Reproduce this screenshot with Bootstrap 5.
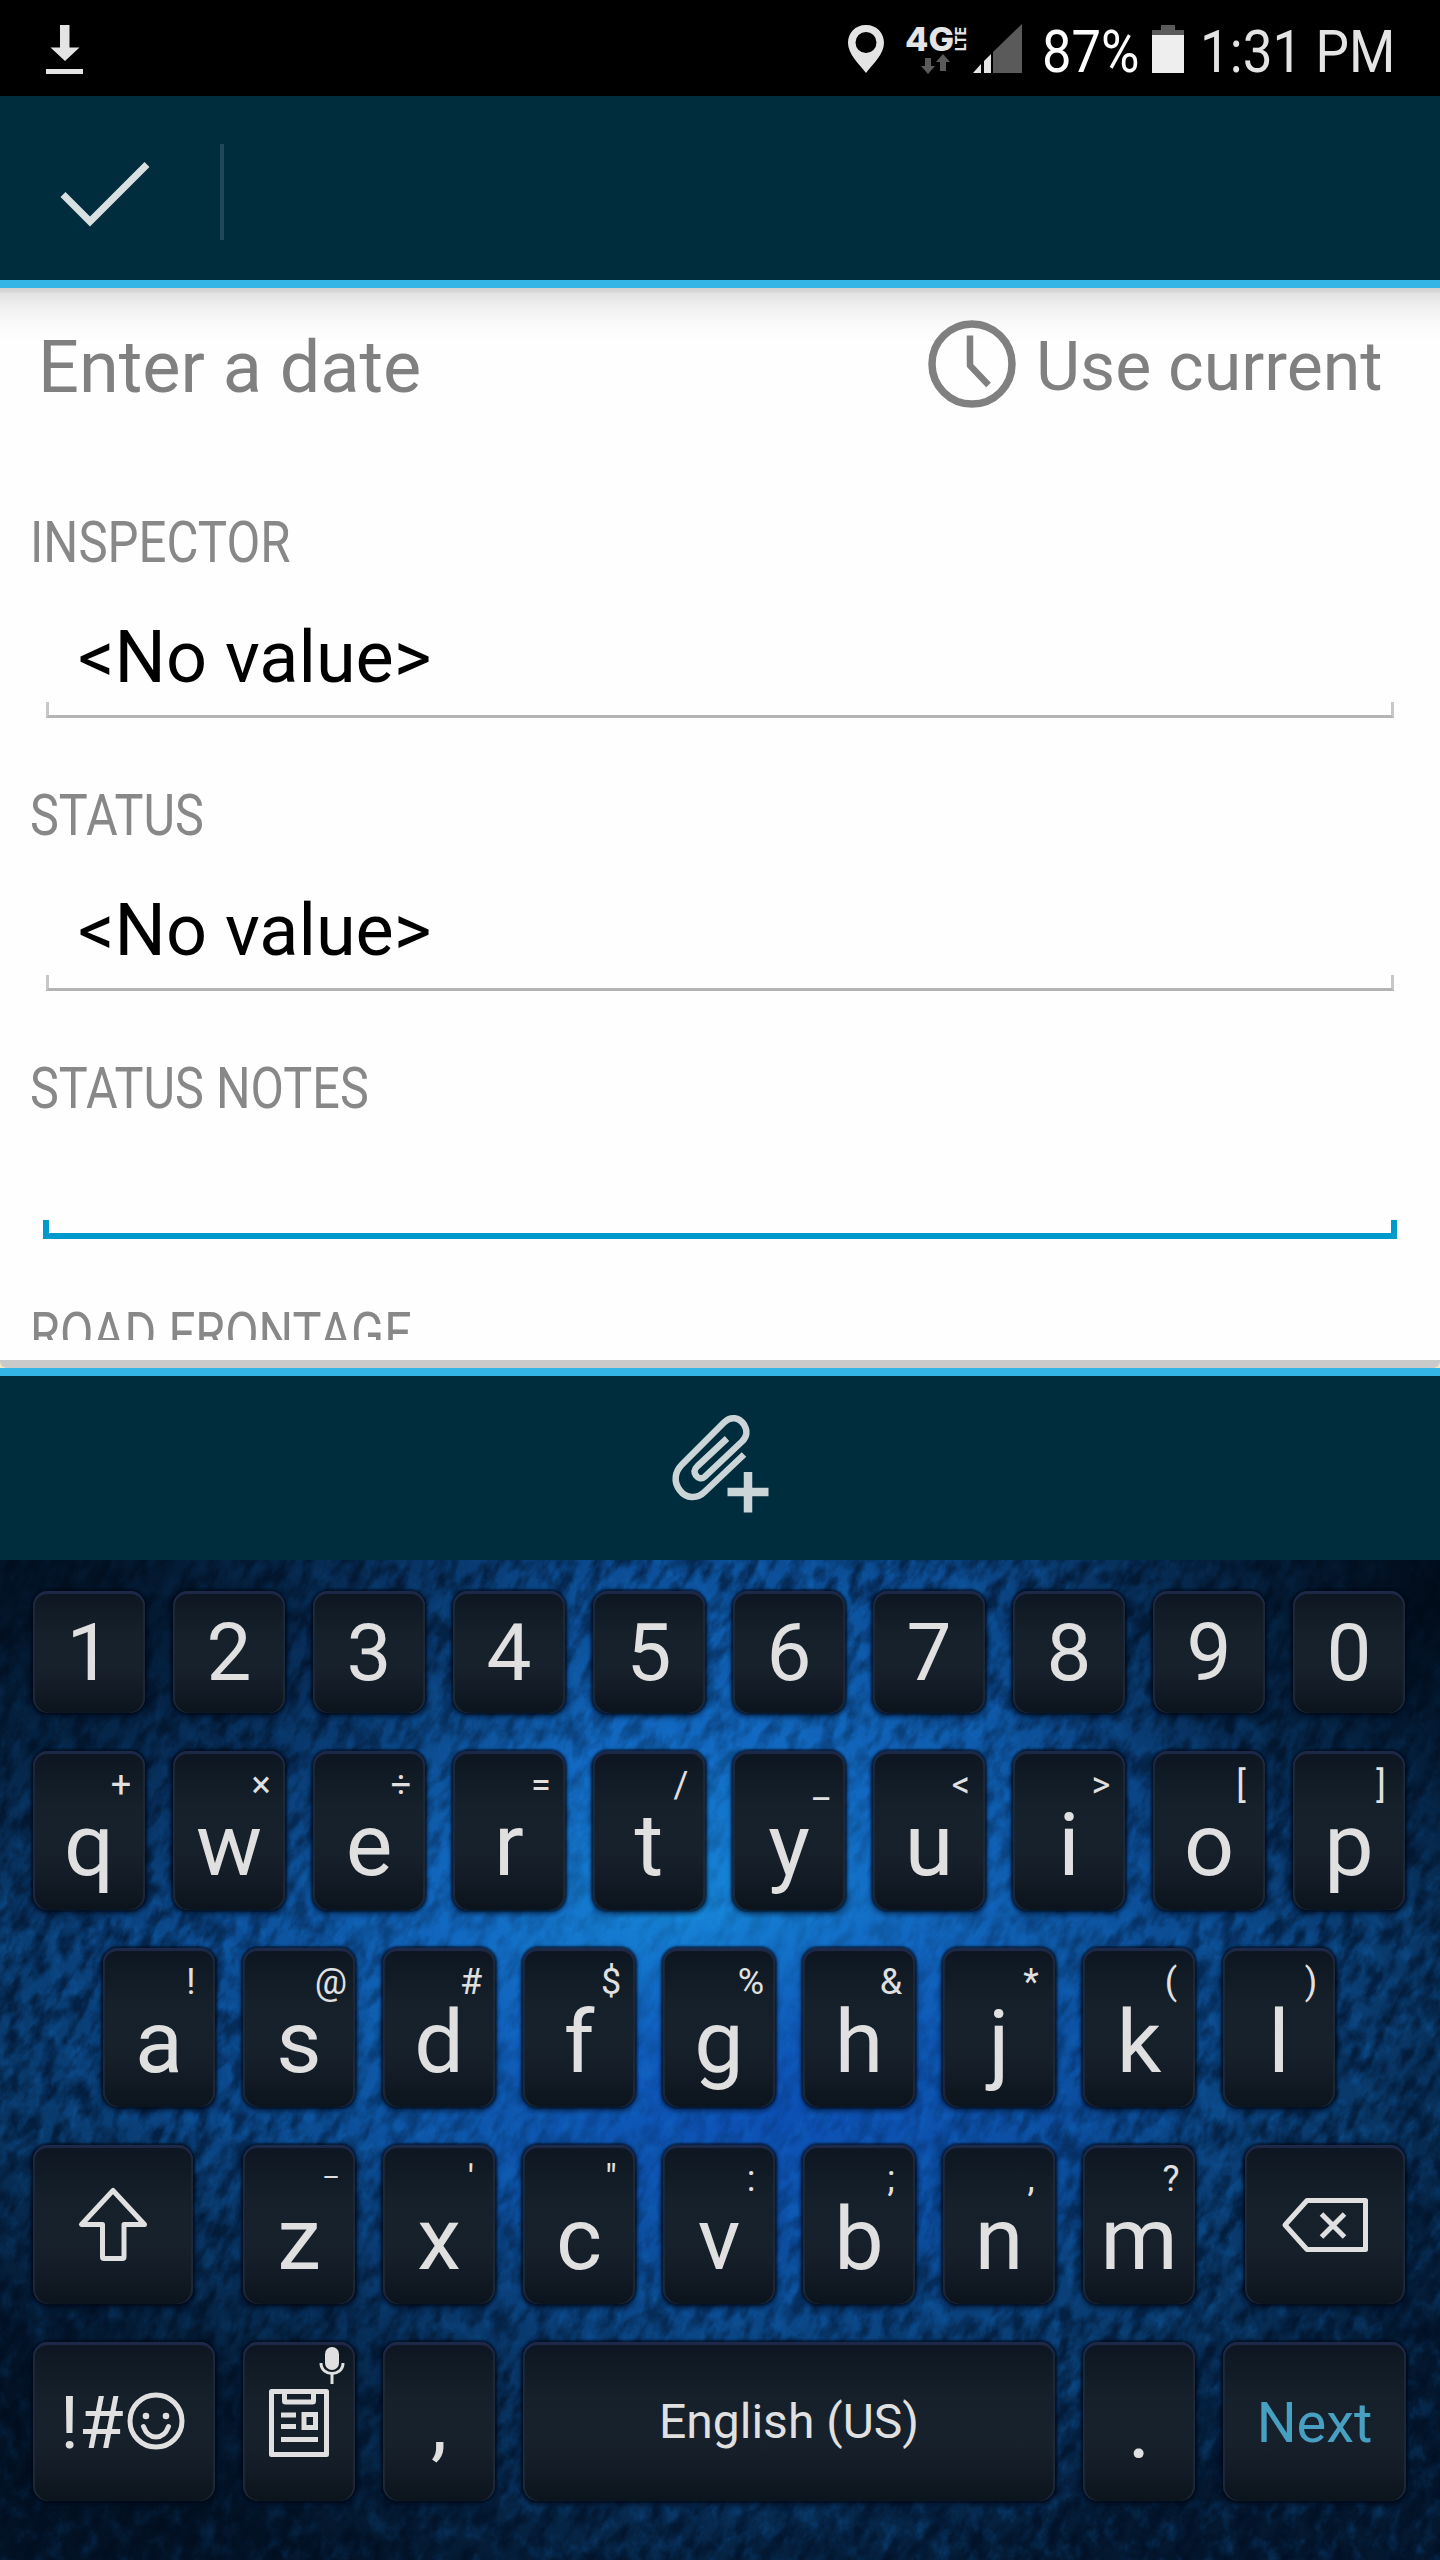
<!DOCTYPE html>
<html lang="en">
<head>
<meta charset="utf-8">
<meta name="viewport" content="width=device-width, initial-scale=1">
<title>Inspection form</title>
<link href="https://cdn.jsdelivr.net/npm/bootstrap@5.3.0/dist/css/bootstrap.min.css" rel="stylesheet">
<style>
  body { width: 1440px; height: 2560px; overflow: hidden; background: #fefefe; font-family: Roboto, "Liberation Sans", sans-serif; }
  svg { display: block; flex: none; }
  .statusbar { height: 96px; background: #000; color: #e4e4e4; }
  .squeeze { display: block; flex: none; white-space: nowrap; transform: scaleX(.852); transform-origin: 0 50%; }
  .squeeze.roomy { transform: scaleX(.862); }
  .statustext { font-size: 60px; line-height: 96px; padding-top: 4px; height: 96px; transform: scaleX(.885); }
  .pct { width: 101px; color: #fff; transform: scaleX(.875); }
  .actionbar { height: 192px; background: #002d3d; border-bottom: 8px solid #33b5e5; }
  .divider { width: 4px; height: 96px; margin-top: 8px; background: #20485a; }
  .formarea { height: 1052px; background: linear-gradient(#d2d2d2 0, #d6d6d6 4px, #e2e2e2 5px, #f0f0f0 19px, #f9f9f9 34px, #fefefe 52px); }
  .daterow { height: 160px; font-size: 72px; line-height: 160px; color: #808080; }
  .usecurrent { font-size: 68px; height: 158px; line-height: 158px; }
  .fieldlabel { font-size: 57px; line-height: 61px; height: 60px; color: #888; padding-left: 30px; }
  .fieldvalue { font-size: 72px; line-height: 92px; color: #000; margin-top: 40px; padding-left: 78px; height: 90px; }
  .tray { height: 16px; margin: 0 46px 67px; border: 3px solid #c8c8c8; border-top: 0; border-bottom-color: #b4b4b4; }
  .tray.active { height: 19px; margin: 102px 43px 64px; border: 6px solid #0099cc; border-top: 0; }
  .formfoot { height: 28px; background: linear-gradient(#fefefe 20px, #efe9c4 20px); }
  .formfoot div { height: 8px; background: #cacaca; border-radius: 0 0 7px 7px; }
  .attachbar { height: 192px; background: #002d3d; border-top: 8px solid #33b5e5; }

  .keyboard { height: 1000px; padding: 31px 33px 0; background: #03142a; }
  .wall { left: 0; top: 0; z-index: 0; }
  .keyrow { position: relative; z-index: 1; gap: 28px; }
  .capkey { --bs-btn-padding-x: 0; --bs-btn-padding-y: 0; --bs-btn-border-width: 0; width: 112px; height: 159px; flex: none; padding: 14px 0 0; border-radius: 15px; color: #e0e0e0;
    background: linear-gradient(#0d1620, #15202b 35%, #17212c 60%, #131c26 80%, #0b131c);
    box-shadow: inset 0 3px 1px #1e294a, inset 2px 0 1px #1d2838, inset -2px 0 1px #1d2838, 0 0 2px 2px rgba(0,8,20,.6), 0 3px 4px 2px rgba(0,10,30,.45); line-height: 1; }
  .capkey:hover { color: #e0e0e0; }
  .hint { width: 48px; font-size: 36px; line-height: 40px; height: 40px; }
  .dash { font-size: 27px; line-height: 38px; }
  .glyph { font-size: 88px; line-height: 80px; height: 80px; }
  .numkey { height: 122px; padding: 2px 0 0; font-size: 80px; }
  .lowkey { height: 159px; padding: 3px 0 0; }
  .wide { width: 160px; padding: 0; }
  .sym { width: 182px; font-size: 73px; }
  .next { width: 183px; font-size: 56px; color: #479fc2; }
  .space { width: 532px; font-size: 48px; padding-top: 0; }
  .dot { font-size: 88px; padding-top: 10px; }
  .comma { font-size: 82px; padding-top: 2px; }
</style>
</head>
<body>
<header>
  <div class="statusbar d-flex align-items-start">
    <svg class="ms-0" width="100" height="96" fill="#e4e4e4"><path d="M60 25h9.500v22.500h10L65 61 50.500 47.500H60z"/><path d="M46 69h37v5H46z"/></svg>
    <div class="d-flex align-items-start ms-auto" style="width:592px">
      <svg width="36" height="96"><path fill="#e4e4e4" fill-rule="evenodd" d="M18 25C7 25 0 33 0 43c0 11 11 21 18 30 7-9 18-19 18-30 0-10-7-18-18-18zm0 7a10.500 10.500 0 1 1 0 21 10.500 10.500 0 0 1 0-21z"/></svg>
      <svg width="62" height="96" style="margin-left:22px" fill="#e4e4e4" font-family="Inter, Roboto, sans-serif" font-weight="800"><text x="-1" y="50.500" font-size="33" textLength="49" lengthAdjust="spacingAndGlyphs">4G</text><text transform="translate(59.500 51) rotate(-90)" font-size="14" textLength="24" lengthAdjust="spacingAndGlyphs">LTE</text><path fill="#5a5a5a" d="M19 58h6v8h4l-7 8-7-8h4zM34 71v-9h-4l7-8 7 8h-4v9z"/></svg>
      <svg width="49" height="96" style="margin-left:5px"><path fill="#5a5a5a" d="M49 24v49H20V52z"/><path fill="#e4e4e4" d="M0 73l8-9v9zM11 73V61l7-7v19z"/></svg>
      <span class="squeeze statustext pct" style="margin-left:20px">87%</span>
      <svg width="32" height="96" style="margin-left:9px"><path fill="#5a5a5a" d="M9 25h14v5h9v6H0v-6h9z"/><path fill="#eee" d="M0 35h32v38H0z"/></svg>
      <span class="squeeze statustext" style="margin-left:16px">1:31 PM</span>
    </div>
  </div>
  <nav class="actionbar d-flex align-items-center">
    <svg width="220" height="184"><path d="M63 98l27 27 57-57" transform="translate(0 .5)" fill="none" stroke="#d8e0e2" stroke-width="7"/></svg>
    <div class="divider"></div>
  </nav>
</header>

<main>
  <div class="formarea overflow-hidden">
    <div class="daterow d-flex">
      <span style="margin-left:38px">Enter a date</span>
      <span class="usecurrent d-flex ms-auto" style="width:512px">
        <svg width="108" height="152"><g fill="none" stroke="#808080"><circle cx="44" cy="76" r="40" stroke-width="7.500"/><path d="M42 47.500v30l18.500 19.500" stroke-width="6.500" stroke-linejoin="round"/></g></svg>
        <span>Use current</span>
      </span>
    </div>
    <div style="height:64px"></div>
    <div class="fieldlabel"><span class="squeeze roomy">INSPECTOR</span></div>
    <div class="fieldvalue">&lt;No value&gt;</div>
    <div class="tray"></div>
    <div class="fieldlabel"><span class="squeeze">STATUS</span></div>
    <div class="fieldvalue">&lt;No value&gt;</div>
    <div class="tray"></div>
    <div class="fieldlabel"><span class="squeeze">STATUS NOTES</span></div>
    <div class="tray active"></div>
    <div class="fieldlabel"><span class="squeeze">ROAD FRONTAGE</span></div>
  </div>
  <div class="formfoot d-flex flex-column justify-content-end"><div></div></div>
</main>

<div class="attachbar d-flex justify-content-center">
  <svg width="100" height="140" viewBox="670 1375.500 100 140"><g fill="none" stroke="#cbd5d8" stroke-width="6.500"><path d="M744 1454L705 1491C697 1499 686 1498 680 1490C673 1481 675 1471 682 1464L724 1422C731 1415 739 1417 744 1424C748 1431 747 1436 742 1441L705 1476C702 1479 698 1478 696 1475C693 1471 695 1468 698 1465L727 1438"/><path d="M727.500 1491.500h41M748 1471.500v40.500" stroke-width="8.500"/></g></svg>
</div>

<section class="keyboard position-relative overflow-hidden">
  <svg class="wall position-absolute" width="1440" height="1000">
    <defs>
      <radialGradient id="glow" gradientUnits="userSpaceOnUse" cx="0" cy="0" r="1" gradientTransform="translate(690 350) scale(920 700)">
        <stop offset="0" stop-color="#1788da"/><stop offset=".25" stop-color="#1268c0"/><stop offset=".5" stop-color="#0c4e96"/><stop offset=".78" stop-color="#093868"/><stop offset="1" stop-color="#04182f"/>
      </radialGradient>
      <radialGradient id="royal" gradientUnits="userSpaceOnUse" cx="0" cy="0" r="1" gradientTransform="translate(780 550) scale(430 200)">
        <stop offset="0" stop-color="#0c4cb4" stop-opacity=".85"/><stop offset="1" stop-color="#0c4cb4" stop-opacity="0"/>
      </radialGradient>
      <radialGradient id="shade" gradientUnits="userSpaceOnUse" cx="0" cy="0" r="1" gradientTransform="translate(80 40) scale(560 340)">
        <stop offset="0" stop-color="#010a16" stop-opacity=".8"/><stop offset="1" stop-color="#010a16" stop-opacity="0"/>
      </radialGradient>
      <radialGradient id="shade2" gradientUnits="userSpaceOnUse" cx="0" cy="0" r="1" gradientTransform="translate(1440 40) scale(480 340)">
        <stop offset="0" stop-color="#010a16" stop-opacity=".9"/><stop offset="1" stop-color="#010a16" stop-opacity="0"/>
      </radialGradient>
      <radialGradient id="shade3" gradientUnits="userSpaceOnUse" cx="0" cy="0" r="1" gradientTransform="translate(150 860) scale(560 300)">
        <stop offset="0" stop-color="#010a16" stop-opacity=".6"/><stop offset="1" stop-color="#010a16" stop-opacity="0"/>
      </radialGradient>
      <radialGradient id="calm" gradientUnits="userSpaceOnUse" cx="0" cy="0" r="1" gradientTransform="translate(720 420) scale(600 440)">
        <stop offset="0" stop-color="#fff" stop-opacity=".14"/><stop offset=".4" stop-color="#fff" stop-opacity=".34"/><stop offset="1" stop-color="#fff"/>
      </radialGradient>
      <mask id="calmmask"><rect width="1440" height="1000" fill="url(#calm)"/></mask>
      <filter id="grain" x="0" y="0" width="100%" height="100%" color-interpolation-filters="sRGB">
        <feTurbulence type="fractalNoise" baseFrequency=".075 .038" numOctaves="4" seed="8"/>
        <feColorMatrix values="0 0 0 0 0  0 0 0 0 .05  0 0 0 0 .13  2.800 0 0 0 -1.100"/>
      </filter>
      <filter id="sheen" x="0" y="0" width="100%" height="100%" color-interpolation-filters="sRGB">
        <feTurbulence type="fractalNoise" baseFrequency=".06 .05" numOctaves="4" seed="31"/>
        <feColorMatrix values="0 0 0 0 .08  0 0 0 0 .45  0 0 0 0 .8  0 2.400 0 0 -1.100"/>
      </filter>
    </defs>
    <rect width="1440" height="1000" fill="url(#glow)"/>
    <rect width="1440" height="1000" fill="url(#royal)"/>
    <rect width="1440" height="1000" filter="url(#sheen)" opacity=".3"/>
    <g mask="url(#calmmask)"><g transform="translate(-350 -300) rotate(28 720 500)"><rect x="-400" y="-600" width="2800" height="2600" filter="url(#grain)" opacity=".62"/></g></g>
    <rect width="1440" height="1000" fill="url(#shade)"/>
    <rect width="1440" height="1000" fill="url(#shade2)"/>
    <rect width="1440" height="1000" fill="url(#shade3)"/>
  </svg>

  <div class="keyrow d-flex" style="margin-bottom:38px">
    <button class="btn capkey numkey">1</button><button class="btn capkey numkey">2</button><button class="btn capkey numkey">3</button><button class="btn capkey numkey">4</button><button class="btn capkey numkey">5</button><button class="btn capkey numkey">6</button><button class="btn capkey numkey">7</button><button class="btn capkey numkey">8</button><button class="btn capkey numkey">9</button><button class="btn capkey numkey">0</button>
  </div>
  <div class="keyrow d-flex" style="margin-bottom:38px">
    <button class="btn capkey d-flex flex-column"><span class="hint align-self-end">+</span><span class="glyph align-self-center">q</span></button>
    <button class="btn capkey d-flex flex-column"><span class="hint align-self-end">×</span><span class="glyph align-self-center">w</span></button>
    <button class="btn capkey d-flex flex-column"><span class="hint align-self-end">÷</span><span class="glyph align-self-center">e</span></button>
    <button class="btn capkey d-flex flex-column"><span class="hint align-self-end">=</span><span class="glyph align-self-center">r</span></button>
    <button class="btn capkey d-flex flex-column"><span class="hint align-self-end">/</span><span class="glyph align-self-center">t</span></button>
    <button class="btn capkey d-flex flex-column"><span class="hint align-self-end">_</span><span class="glyph align-self-center">y</span></button>
    <button class="btn capkey d-flex flex-column"><span class="hint align-self-end">&lt;</span><span class="glyph align-self-center">u</span></button>
    <button class="btn capkey d-flex flex-column"><span class="hint align-self-end">&gt;</span><span class="glyph align-self-center">i</span></button>
    <button class="btn capkey d-flex flex-column"><span class="hint align-self-end">[</span><span class="glyph align-self-center">o</span></button>
    <button class="btn capkey d-flex flex-column"><span class="hint align-self-end">]</span><span class="glyph align-self-center">p</span></button>
  </div>
  <div class="keyrow d-flex" style="margin-bottom:38px;padding-left:70px">
    <button class="btn capkey d-flex flex-column"><span class="hint align-self-end">!</span><span class="glyph align-self-center">a</span></button>
    <button class="btn capkey d-flex flex-column"><span class="hint align-self-end">@</span><span class="glyph align-self-center">s</span></button>
    <button class="btn capkey d-flex flex-column"><span class="hint align-self-end">#</span><span class="glyph align-self-center">d</span></button>
    <button class="btn capkey d-flex flex-column"><span class="hint align-self-end">$</span><span class="glyph align-self-center">f</span></button>
    <button class="btn capkey d-flex flex-column"><span class="hint align-self-end">%</span><span class="glyph align-self-center">g</span></button>
    <button class="btn capkey d-flex flex-column"><span class="hint align-self-end">&amp;</span><span class="glyph align-self-center">h</span></button>
    <button class="btn capkey d-flex flex-column"><span class="hint align-self-end">*</span><span class="glyph align-self-center">j</span></button>
    <button class="btn capkey d-flex flex-column"><span class="hint align-self-end">(</span><span class="glyph align-self-center">k</span></button>
    <button class="btn capkey d-flex flex-column"><span class="hint align-self-end">)</span><span class="glyph align-self-center">l</span></button>
  </div>
  <div class="keyrow d-flex" style="margin-bottom:38px">
    <button class="btn capkey wide" style="margin-right:22px"><svg width="160" height="159"><path d="M80 45.500L48.500 79.500h21V112q0 1.500 1.500 1.500h18.500q1.500 0 1.500-1.500V79.500h20.500z" fill="none" stroke="#e0e0e0" stroke-width="5" stroke-linejoin="round"/></svg></button>
    <button class="btn capkey d-flex flex-column"><span class="hint dash align-self-end">–</span><span class="glyph align-self-center">z</span></button>
    <button class="btn capkey d-flex flex-column"><span class="hint align-self-end">'</span><span class="glyph align-self-center">x</span></button>
    <button class="btn capkey d-flex flex-column"><span class="hint align-self-end">"</span><span class="glyph align-self-center">c</span></button>
    <button class="btn capkey d-flex flex-column"><span class="hint align-self-end">:</span><span class="glyph align-self-center">v</span></button>
    <button class="btn capkey d-flex flex-column"><span class="hint align-self-end">;</span><span class="glyph align-self-center">b</span></button>
    <button class="btn capkey d-flex flex-column"><span class="hint align-self-end">,</span><span class="glyph align-self-center">n</span></button>
    <button class="btn capkey d-flex flex-column"><span class="hint align-self-end">?</span><span class="glyph align-self-center">m</span></button>
    <button class="btn capkey wide" style="margin-left:22px"><svg width="160" height="159"><g fill="none" stroke="#e0e0e0" stroke-width="5" stroke-linejoin="round"><path d="M40 80l22-24.500h58.500v49H62z"/><path d="M76.500 69l23 23M99.500 69l-23 23"/></g></svg></button>
  </div>
  <div class="keyrow d-flex">
    <button class="btn capkey lowkey sym d-flex align-items-center"><span style="margin-left:27px">!#</span><svg class="ms-auto" width="91" height="80"><g fill="none" stroke="#e0e0e0" stroke-width="5"><circle cx="32" cy="38" r="26"/><path d="M19.500 43.500c5 14 20 14 25 0" stroke-linecap="round"/></g><g fill="#e0e0e0"><circle cx="22" cy="33" r="3.300"/><circle cx="42" cy="33" r="3.300"/></g></svg></button>
    <button class="btn capkey lowkey p-0"><svg width="112" height="159"><g fill="none" stroke="#e0e0e0" stroke-width="5"><path d="M28.500 49.500h55v63h-55z" stroke-linejoin="round"/><path d="M41.500 50v9q0 1 1 1h27q1 0 1-1v-9M38 73h15M38 84.500h15M38 97.500h37M61 72.500h11.500v13H61z"/></g><path fill="#e0e0e0" d="M82 12a7 7 0 0 1 14 0v9a7 7 0 0 1-14 0z"/><path d="M78 21c0 14 22 14 22 0M89 32v10" fill="none" stroke="#e0e0e0" stroke-width="3"/></svg></button>
    <button class="btn capkey lowkey comma">,</button>
    <button class="btn capkey lowkey space">English (US)</button>
    <button class="btn capkey lowkey dot">.</button>
    <button class="btn capkey lowkey next">Next</button>
  </div>
</section>
<script src="https://cdn.jsdelivr.net/npm/bootstrap@5.3.0/dist/js/bootstrap.bundle.min.js"></script>
</body>
</html>
